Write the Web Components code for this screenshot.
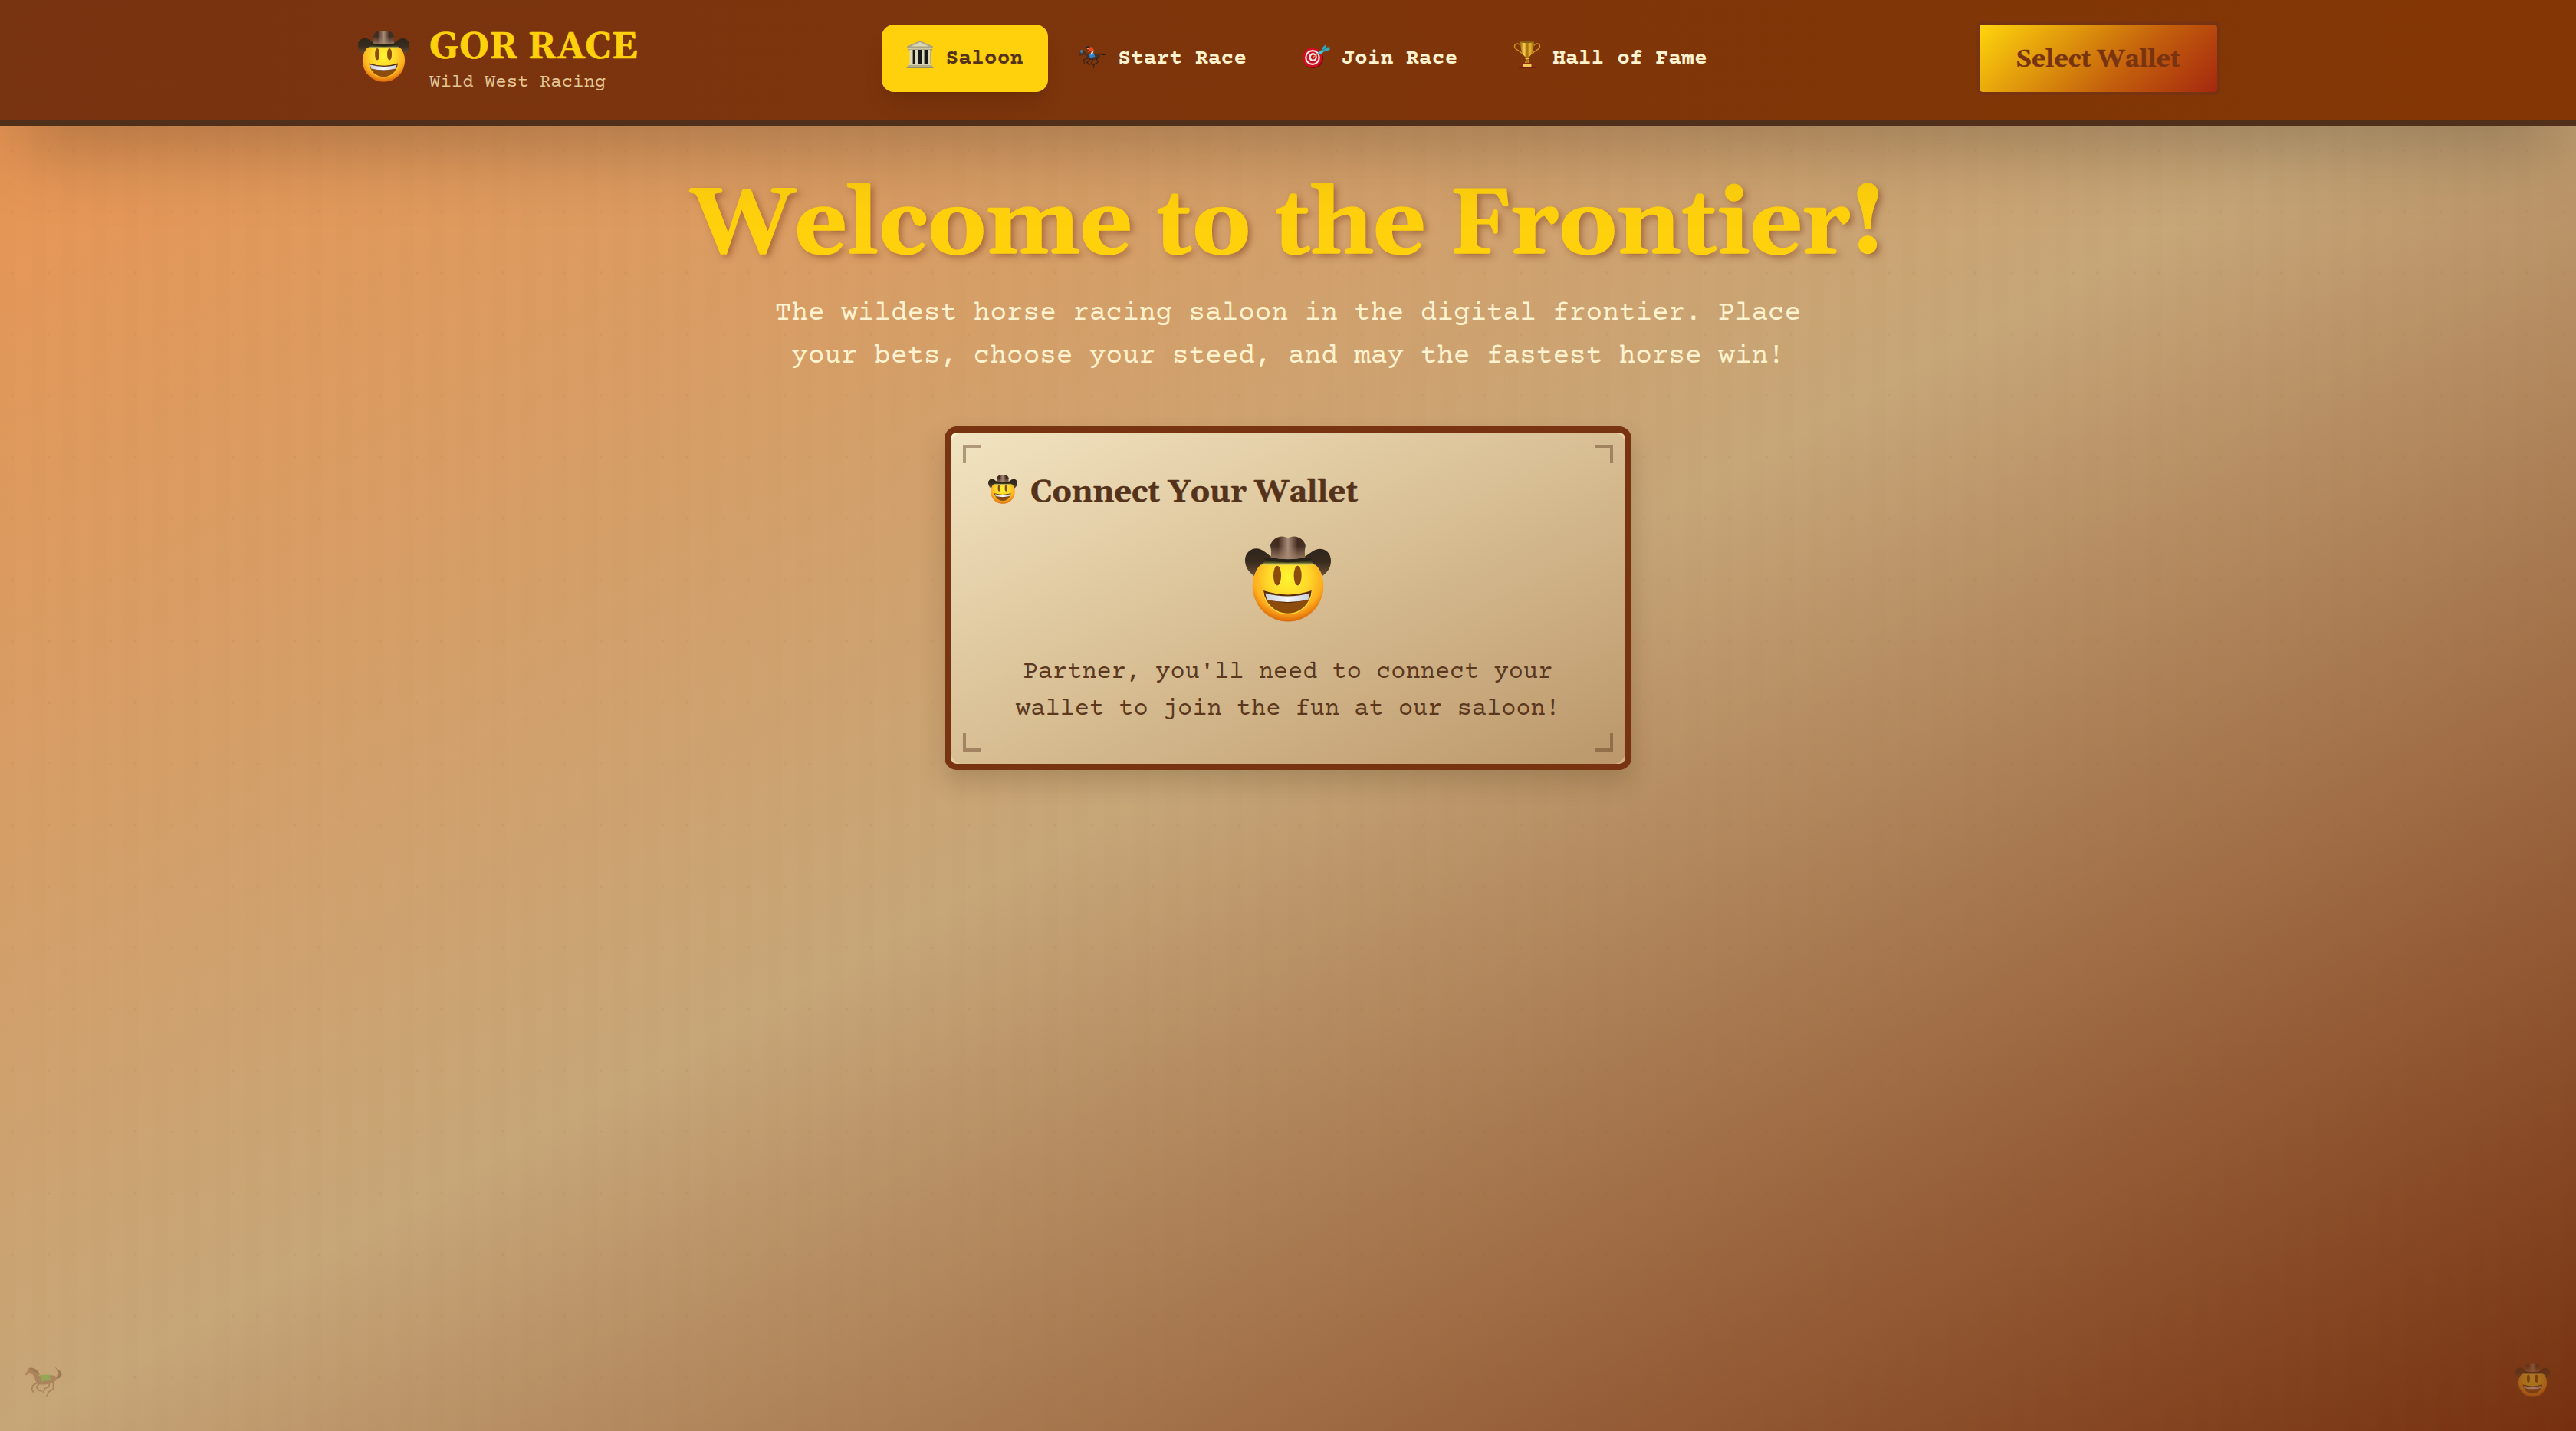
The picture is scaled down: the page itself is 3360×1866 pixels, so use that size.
<!DOCTYPE html>
<html lang="en">
<head>
<meta charset="utf-8">
<title>Gor Race</title>
<style>
  html, body { margin: 0; height: 100%; }
  body {
    --serif: Gelasio, Georgia, "DejaVu Serif", "Liberation Serif", serif;
    --mono: "Courier Prime", "Courier New", "Liberation Mono", monospace;
    --gold: #ffd10d;
    --saddle: #783311;
    --dark: #55331a;
    --cream: #fff3cf;
    font-family: var(--mono);
    overflow: hidden;
  }
</style>
</head>
<body>
<race-app></race-app>
<script>
const define = (name, html) => customElements.define(name, class extends HTMLElement {
  constructor() {
    super();
    this.attachShadow({ mode: 'open' }).innerHTML = html;
  }
});

const icons = {
  cowboy: `<svg viewBox="0 0 100 100">
    <defs>
      <radialGradient id="f" cx=".5" cy=".38" r=".64"><stop offset="0" stop-color="#fff52e"/><stop offset=".45" stop-color="#ffd829"/><stop offset=".76" stop-color="#ffae1e"/><stop offset="1" stop-color="#d65c05"/></radialGradient>
      <linearGradient id="h" x1="0" x2="1" y1="0" y2="0"><stop offset="0" stop-color="#43352b"/><stop offset=".22" stop-color="#43291c"/><stop offset=".5" stop-color="#a98d79"/><stop offset=".78" stop-color="#43291c"/><stop offset="1" stop-color="#43352b"/></linearGradient>
      <linearGradient id="hb" x1="0" x2="0" y1="0" y2="1"><stop offset=".4" stop-color="#a58670" stop-opacity="0"/><stop offset="1" stop-color="#a58670" stop-opacity=".85"/></linearGradient>
      <linearGradient id="b" x1="0" x2="0" y1="0" y2="1"><stop offset="0" stop-color="#2e251b"/><stop offset=".5" stop-color="#3a2c1f"/><stop offset="1" stop-color="#6b5038"/></linearGradient>
      <linearGradient id="g" x1="0" x2="0" y1="0" y2="1"><stop offset="0" stop-color="#20221a"/><stop offset=".55" stop-color="#4b4a20"/><stop offset="1" stop-color="#fff56a"/></linearGradient>
      <linearGradient id="t" x1="0" x2="1" y1="0" y2="0"><stop offset="0" stop-color="#c9cfdb"/><stop offset=".5" stop-color="#f6f8fc"/><stop offset="1" stop-color="#c9cfdb"/></linearGradient>
    </defs>
    <circle cx="50" cy="58.3" r="41.3" fill="url(#f)"/>
    <path d="M0 28C0 20 6 14.500 13.500 14.500C22 14.500 27 24 35 25.500L65 25.500C73 24 79 15 87 15C95 15 100 21 100 28.500C100 37 96 42 90 46.500C88 41 86 37 82 33.500L18 33.500C14 37 12 42 10.500 46.500C4 42 0 36 0 28Z" fill="url(#b)"/>
    <path d="M24 28.500Q50 25 76 28.500L81 33.800H19Z" fill="url(#g)"/>
    <path d="M29.400 11C31 5 37 .5 43 .5C46 .5 48 1.500 50 2C52 1.500 54 .5 57 .5C63 .5 69 5 70.400 11C69.500 16 69 20 70 25Q50 30 30 25C31 20 30.500 16 29.400 11Z" fill="url(#h)"/>
    <path d="M29.400 11C31 5 37 .5 43 .5C46 .5 48 1.500 50 2C52 1.500 54 .5 57 .5C63 .5 69 5 70.400 11C69.500 16 69 20 70 25Q50 30 30 25C31 20 30.500 16 29.400 11Z" fill="url(#hb)"/>
    <path d="M28 25Q50 29 72 25L79 27Q50 34 21 27Z" fill="#272319"/>
    <ellipse cx="37.700" cy="46.500" rx="4.800" ry="12" fill="#ffec42"/><ellipse cx="61.500" cy="46.500" rx="4.800" ry="12" fill="#ffec42"/>
    <ellipse cx="37.500" cy="46" rx="4.500" ry="11.500" fill="#8d4c0c"/><ellipse cx="61.300" cy="46" rx="4.500" ry="11.500" fill="#8d4c0c"/>
    <path d="M21.500 63.500Q50 73 77.500 63.500C77 79 65 90.500 50 90.500S22 79 21.500 63.500Z" fill="#8c4d0c" stroke="#ffe03a" stroke-width="1"/>
    <path d="M21.500 63.500Q50 73 77.500 63.500L76 71Q73 76 50 78Q27 76 23 71Z" fill="#5c2c08"/>
    <path d="M23.500 66.500Q50 73.500 75.500 66.500L73.500 74Q50 79.500 25.500 74Z" fill="url(#t)"/></svg>`,
  museum: `<svg viewBox="0 0 36 36">
    <path d="M2 11H34V12.500H2Z" fill="#8f8a66"/><path d="M7 12H30V30H7Z" fill="#17181a"/>
    <path d="M18 0L35 7.500V9.500H1V7.500Z" fill="#aaa57f"/><path d="M18 2L30 7.500H6Z" fill="#dad6b4"/>
    <path d="M2 9H34L33 11.500H3Z" fill="#cfcaa5"/>
    <path d="M4.500 12h4v18h-4zM12 12h3.600v18H12zM20 12h3.600v18H20zM28 12h4v18h-4z" fill="#ddd9b8"/>
    <path d="M8 12h1v18H8zM15 12h1v18h-1zM23 12h1v18h-1zM31.500 12h1v18h-1z" fill="#8d8966"/>
    <path d="M3.500 30H32.500V32H3.500Z" fill="#d6d1ae"/><path d="M2 32H34V34H2Z" fill="#b4af8a"/><path d="M.5 34H35.500V36H.5Z" fill="#cfcaa5"/><path d="M.5 35.300H35.500V36H.5Z" fill="#807c5c"/></svg>`,
  jockey: `<svg viewBox="0 0 36 36">
    <path d="M27 17.500C30 16.500 31 20 35.500 17.500" fill="none" stroke="#241914" stroke-width="1.300" stroke-linecap="round"/>
    <path d="M.5 17.500L4 12.500L7 13.500L12 18C17 19 24 17 27.500 18C29 20 27.500 22.500 25 24C21 25 15 25.500 12.500 24C10 22.500 9.500 20 7 17L3 19.500H1Z" fill="#4d2d20"/>
    <path d="M12 23L6.500 25L7.500 30M15 24.500L10.500 28.500L14.500 31.500M23.500 23.500L25 28.500L20 31L19.500 35.500M19 24.500L16.500 29L20 32.500" fill="none" stroke="#3b2118" stroke-width="1.200" stroke-linejoin="round" stroke-linecap="round"/>
    <path d="M1.500 13.500L4 11.800L6 14L3.500 17Z" fill="#3b7fb5"/>
    <path d="M13 18L19.500 16L21.500 21L15 22.500Z" fill="#2a87cf"/>
    <path d="M12.500 10L16.500 8L20 12L17.500 15.500L15 13.500L12.500 15L11.500 14L14 12Z" fill="#ee4a1d"/>
    <path d="M17 14.500L19.500 14L17.500 18.500L15 18Z" fill="#efe9df"/>
    <circle cx="12.300" cy="9.800" r="1.500" fill="#e0a070"/><path d="M9.500 8.900C10 7 13.300 6.500 14 8.700L13 9.500Z" fill="#23252b"/></svg>`,
  target: `<svg viewBox="0 0 36 36">
    <ellipse cx="14" cy="23" rx="13" ry="13" fill="#7d0711"/><ellipse cx="13" cy="22" rx="12.800" ry="13" fill="#cc1020"/>
    <ellipse cx="13" cy="22" rx="9.800" ry="10" fill="#f5eeec"/><ellipse cx="13" cy="22" rx="7.600" ry="7.800" fill="#cc1020"/>
    <ellipse cx="13.500" cy="21.500" rx="5.200" ry="5.400" fill="#f5eeec"/><ellipse cx="13.800" cy="21.500" rx="2.900" ry="3.100" fill="#cc1020"/>
    <path d="M14 21.500L22 15" stroke="#c8a64a" stroke-width="1.300"/>
    <path d="M19 18C20 14.500 23 13 26 12L28 13.500C26.500 16.500 23 19 19 18Z" fill="#4fc3d0"/>
    <path d="M25 13L26 9L29.500 5.500L30.500 9L35.500 8.500V12L30.500 14L27 14.500Z" fill="#3aa5b5"/>
    <path d="M26 13L33.500 7.500" stroke="#237583" stroke-width=".8"/></svg>`,
  trophy: `<svg viewBox="0 0 36 36">
    <defs><linearGradient id="a" x1="0" x2="1" y1="0" y2="0"><stop offset="0" stop-color="#a36a0a"/><stop offset=".28" stop-color="#f6d155"/><stop offset=".5" stop-color="#a96e08"/><stop offset=".72" stop-color="#e9b52f"/><stop offset="1" stop-color="#8d5a08"/></linearGradient></defs>
    <path d="M9.500 6.500C6 2 1.500 4 1.500 8C1.500 12 8 12 11.500 17M26.500 6.500C30 2 34.500 4 34.500 8C34.500 12 28 12 24.500 17" fill="none" stroke="#c99222" stroke-width="1.500"/>
    <path d="M9 1.500C9 10 11 19.500 16.500 21.500V24L15 29.500H21L19.500 24V21.500C25 19.500 27 10 27 1.500Z" fill="url(#a)"/>
    <ellipse cx="18" cy="1.600" rx="9" ry="1.500" fill="#8a5f12"/>
    <path d="M15.500 22.500H20.500V24H15.500Z" fill="#f0c446"/>
    <path d="M10 29H26L27 34.500H9Z" fill="#8d2e12"/><path d="M12.500 30.300H23.500V34H12.500Z" fill="#efca58"/><path d="M7 34H29V36H7Z" fill="#701f0d"/></svg>`,
  horse: `<svg viewBox="0 0 48 42">
    <path d="M37.500 13.500C43 15 45.500 9 42.500 5C40.500 3 39.500 1 39 0C40.500 3 47 4 48 10C48 14 43 17 39 15.500Z" fill="#5b341c"/>
    <path d="M0 10L4 5L5 2L8 3C13 4 16 8 19 12C25 13 33 10 39 12C43 14 42 18 37 21C30 23 24 24.500 17 23C13 21 14 15 10 10L5 9L2 11.500Z" fill="#7d4f30"/>
    <path d="M5 2C11 0 17 4 19.500 11L14 8Z" fill="#5b341c"/>
    <path d="M15.500 21.500L10 25L9 30L11 33M18 23L15 27L18 31L22 32M32 22L31 26.500L26 28.500L24 33.500M37 20L37 29L31 33L28.500 39" fill="none" stroke="#75492c" stroke-width="1.700" stroke-linejoin="round" stroke-linecap="round"/>
    <path d="M19.500 11L32 10.500L34 17L22 19.500Z" fill="#3fae1e"/></svg>`
};

customElements.define('emoji-icon', class extends HTMLElement {
  connectedCallback() {
    this.attachShadow({ mode: 'open' }).innerHTML =
      `<style>:host{display:block;flex:none}svg{display:block;width:100%;height:100%;overflow:visible}</style>` + icons[this.getAttribute('name')];
  }
});

define('brand-logo', `<style>
  :host { display: flex; align-items: center; gap: 24px; }
  emoji-icon { width: 67px; height: 67px; margin: 0 2px 0 3px; position: relative; top: -3px; }
  .text { padding-top: 6px; }
  .name { font: bold 48px/56px var(--serif); -webkit-text-stroke: .6px var(--gold); color: var(--gold); }
  .tag { font: 24px/32px var(--mono); color: #e3c595; padding-top: 2px; }
</style>
<emoji-icon name="cowboy"></emoji-icon>
<div class="text"><div class="name"><slot></slot></div><div class="tag"><slot name="tag"></slot></div></div>`);

define('nav-item', `<style>
  :host { display: flex; align-items: center; gap: 16px; height: 88px; padding: 0 32px; box-sizing: border-box;
    border-radius: 16px; font: bold 28px/40px var(--mono); color: var(--cream); white-space: nowrap; }
  :host([active]) { background: var(--gold); color: var(--dark);
    box-shadow: 0 20px 30px -6px rgba(0,0,0,.1), 0 8px 12px -8px rgba(0,0,0,.1); }
  ::slotted(emoji-icon) { width: 36px; height: 36px; position: relative; top: -5px; }
  span { margin: 1px 0 -1px -1px; padding-right: 1px; }
</style><slot name="icon"></slot><span><slot></slot></span>`);

define('wallet-button', `<style>
  :host { display: flex; align-items: center; justify-content: center; width: 318px; height: 96px; box-sizing: border-box;
    border: 4px solid var(--saddle); border-radius: 8px; padding-top: 3px;
    background: linear-gradient(135deg, #ffd50c, #c4600c 62%, #a5280f) padding-box;
    font: bold 32px/48px var(--serif); -webkit-text-stroke: .4px var(--saddle); color: var(--saddle); }
  span { margin-left: -1px; }
</style><span><slot></slot></span>`);

define('site-header', `<style>
  :host { display: block; position: relative; height: 164px; box-sizing: border-box; border-bottom: 8px solid #50301a;
    background: linear-gradient(90deg, #783310, #843704); box-shadow: 0 50px 100px -24px rgba(0,0,0,.25); }
  .row { display: flex; justify-content: space-between; align-items: center; width: 2432px; height: 152px; margin: 0 auto; }
  nav { display: flex; gap: 8px; }
</style>
<div class="row">
  <brand-logo>GOR RACE<span slot="tag">Wild West Racing</span></brand-logo>
  <nav>
    <nav-item active><emoji-icon slot="icon" name="museum"></emoji-icon>Saloon</nav-item>
    <nav-item><emoji-icon slot="icon" name="jockey"></emoji-icon>Start Race</nav-item>
    <nav-item><emoji-icon slot="icon" name="target"></emoji-icon>Join Race</nav-item>
    <nav-item><emoji-icon slot="icon" name="trophy"></emoji-icon>Hall of Fame</nav-item>
  </nav>
  <wallet-button>Select Wallet</wallet-button>
</div>`);

define('hero-banner', `<style>
  :host { display: block; text-align: center; }
  h1 { margin: 0; font: bold 120px/120px var(--serif); -webkit-text-stroke: 1.4px var(--gold); color: var(--gold); text-shadow: 4px 4px 8px rgba(120,51,17,.5); }
  p { width: 1344px; margin: 26px auto 0; font: 36px/56px var(--mono); color: var(--cream); }
</style>
<h1>Welcome to the Frontier!</h1>
<p>The wildest horse racing saloon in the digital frontier. Place your bets, choose your steed, and may the fastest horse win!</p>`);

define('wanted-card', `<style>
  :host { display: block; position: relative; width: 896px; height: 448px; box-sizing: border-box;
    border: 8px solid var(--saddle); border-radius: 16px;
    background: linear-gradient(to bottom right, #fff6d2, #e6cfa3 50%, #d2b182) padding-box;
    box-shadow: 0 16px 32px rgba(60,40,15,.2); }
  .paper { height: 100%; box-sizing: border-box; padding: 48px; border-radius: 16px;
    background: linear-gradient(to bottom right, #f2e4c1, #d8be93 50%, #bb976a); }
  i { position: absolute; width: 24px; height: 24px; box-sizing: border-box; border: 0 solid rgba(85,51,26,.42); }
  .tl { top: 16px; left: 16px; border-width: 4px 0 0 4px; }
  .tr { top: 16px; right: 16px; border-width: 4px 4px 0 0; }
  .bl { bottom: 16px; left: 16px; border-width: 0 0 4px 4px; }
  .br { bottom: 16px; right: 16px; border-width: 0 4px 4px 0; }
  h3 { display: flex; align-items: center; gap: 16px; margin: 0; font: bold 40px/56px var(--serif); -webkit-text-stroke: .5px var(--dark); color: var(--dark); }
  h3 span { padding-top: 3px; margin-bottom: -3px; }
  h3 emoji-icon { width: 38px; height: 38px; margin: 0 1px; position: relative; top: -2px; }
  .big { width: 112px; height: 112px; margin: 31px auto 0; }
  p { margin: 42px 0 0; font: 32px/48px var(--mono); color: #5b381d; text-align: center; }
</style>
<div class="paper">
  <h3><emoji-icon name="cowboy"></emoji-icon><span>Connect Your Wallet</span></h3>
  <emoji-icon class="big" name="cowboy"></emoji-icon>
  <p>Partner, you'll need to connect your<br>wallet to join the fun at our saloon!</p>
</div>
<i class="tl"></i><i class="tr"></i><i class="bl"></i><i class="br"></i>`);

define('race-app', `<style>
  :host { display: flex; flex-direction: column; position: relative; width: 3360px; height: 1866px; overflow: hidden;
    background:
      radial-gradient(circle at 16px 36px, rgba(139,69,19,.06) 1.500px, transparent 2.500px) 0 0 / 80px 80px,
      radial-gradient(circle at 64px 36px, rgba(139,69,19,.06) 1.500px, transparent 2.500px) 0 0 / 80px 80px,
      repeating-linear-gradient(90deg, rgba(139,110,30,.02) 0 20px, transparent 20px 40px),
      linear-gradient(to bottom right, #eb9451, #c7a678 50%, #76300f); }
  main { display: flex; flex-direction: column; align-items: center; padding-top: 71px; }
  wanted-card { margin-top: 63px; }
  .horse { position: absolute; left: 32px; top: 1782px; width: 49px; height: 42px; opacity: .37; }
  .rider { position: absolute; left: 3281px; top: 1777px; width: 45px; height: 45px; opacity: .35; }
</style>
<site-header></site-header>
<main>
  <hero-banner></hero-banner>
  <wanted-card></wanted-card>
</main>
<emoji-icon class="horse" name="horse"></emoji-icon>
<emoji-icon class="rider" name="cowboy"></emoji-icon>`);
</script>
</body>
</html>
